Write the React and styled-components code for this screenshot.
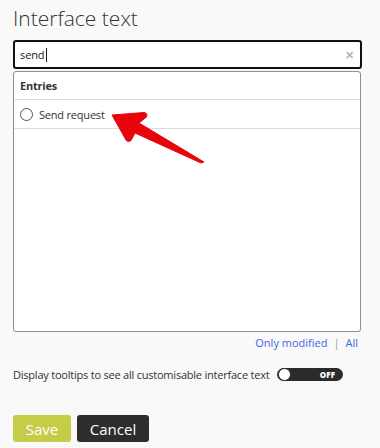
import React from "react";
import styled, { createGlobalStyle } from "styled-components";

const Global = createGlobalStyle`
  html, body { margin: 0; padding: 0; background: #f9f9f9; }
  body { font-family: "Open Sans", "Liberation Sans", sans-serif; color: #333; }
  * { box-sizing: border-box; }
`;

const Page = styled.div`
  position: relative;
  width: 380px;
  min-height: 448px;
  padding: 0 18px 0 13px;
  display: flex;
  flex-direction: column;
  align-items: flex-start;
  & > * { flex-shrink: 0; }
`;

const Title = styled.h1`
  margin: 3px 0 0 0;
  font-size: 21px;
  font-weight: 300;
  line-height: 30px;
  color: #333;
`;

const SearchBox = styled.div`
  margin-top: 7px;
  height: 29px;
  width: 349px;
  border: 2px solid #111;
  border-radius: 3px;
  background: #fff;
  display: flex;
  align-items: center;
  padding: 0 6px 0 5px;
`;

const SearchInput = styled.span`
  flex: 1;
  font-size: 11px;
  letter-spacing: -0.1px;
  color: #222;
  display: flex;
  align-items: center;
`;

const Caret = styled.span`
  display: inline-block;
  width: 1px;
  height: 14px;
  background: #222;
  margin-left: 1px;
`;

const Clear = styled.span`
  font-size: 11px;
  font-weight: 700;
  color: #b5b5b5;
  line-height: 1;
`;

const Panel = styled.div`
  margin-top: 2px;
  width: 348px;
  height: 261px;
  background: #fff;
  border: 1px solid #8e8e8e;
  border-radius: 3px;
  display: flex;
  flex-direction: column;
`;

const PanelHeader = styled.div`
  height: 28px;
  display: flex;
  align-items: center;
  padding-left: 6px;
  font-size: 11px;
  letter-spacing: -0.2px;
  font-weight: 700;
  color: #333;
  border-bottom: 1px solid #dcdcdc;
`;

const Row = styled.div`
  height: 29px;
  display: flex;
  align-items: center;
  padding-left: 6px;
  gap: 6px;
  font-size: 11px;
  letter-spacing: -0.2px;
  color: #333;
  border-bottom: 1px solid #dcdcdc;
`;

const Radio = styled.span`
  width: 13px;
  height: 13px;
  border: 1px solid #555;
  border-radius: 50%;
  background: #fff;
  margin-top: 1px;
`;

const Links = styled.div`
  margin-top: 3px;
  width: 345px;
  line-height: 15px;
  display: flex;
  justify-content: flex-end;
  align-items: center;
  gap: 6px;
  font-size: 11px;
  color: #4466e6;
`;

const Sep = styled.span`
  color: #999;
`;

const ToggleRow = styled.div`
  margin-top: 17px;
  height: 15px;
  display: flex;
  align-items: center;
  gap: 8px;
  font-size: 11px;
  letter-spacing: -0.22px;
  white-space: nowrap;
  color: #333;
`;

const Toggle = styled.div`
  position: relative;
  width: 66px;
  height: 13px;
  border-radius: 7px;
  background: #2b2b2b;
  display: flex;
  align-items: center;
  justify-content: flex-end;
  padding-right: 8px;
`;

const Knob = styled.span`
  position: absolute;
  left: 1px;
  top: 0px;
  width: 13px;
  height: 13px;
  border-radius: 50%;
  background: #fff;
  border: 1px solid #2b2b2b;
`;

const ToggleLabel = styled.span`
  font-size: 8px;
  font-weight: 800;
  color: #fff;
  letter-spacing: 0.2px;
`;

const Buttons = styled.div`
  margin-top: 33px;
  display: flex;
  gap: 6px;
`;

const Button = styled.button`
  height: 27px;
  width: ${(p) => p.$w}px;
  border: none;
  border-radius: 3px;
  background: ${(p) => p.$bg};
  color: #fff;
  font-family: "Open Sans", "Liberation Sans", sans-serif;
  font-size: 15px;
  padding: 0;
`;

const Arrow = styled.svg`
  position: absolute;
  left: 0;
  top: 0;
  pointer-events: none;
`;

export default function App() {
  return (
    <>
      <Global />
      <Page>
        <Title>Interface text</Title>
        <SearchBox>
          <SearchInput>
            send<Caret />
          </SearchInput>
          <Clear>✕</Clear>
        </SearchBox>
        <Panel>
          <PanelHeader>Entries</PanelHeader>
          <Row>
            <Radio />
            Send request
          </Row>
        </Panel>
        <Links>
          <span>Only modified</span>
          <Sep>|</Sep>
          <span>All</span>
        </Links>
        <ToggleRow>
          Display tooltips to see all customisable interface text
          <Toggle>
            <Knob />
            <ToggleLabel>OFF</ToggleLabel>
          </Toggle>
        </ToggleRow>
        <Buttons>
          <Button $w={58} $bg="#c4cc48">Save</Button>
          <Button $w={72} $bg="#2d2d2d">Cancel</Button>
        </Buttons>
        <Arrow width="380" height="448" viewBox="0 0 380 448">
          <path
            d="M112 115 L144 112.5 Q148 113 146.5 117 L139 123 L204 162 L201 163 L135 133 L131 140.5 Q128 143 126 140 Z"
            fill="#e8040a"
            stroke="#e8040a"
            strokeWidth="1"
            strokeLinejoin="round"
          />
        </Arrow>
      </Page>
    </>
  );
}
